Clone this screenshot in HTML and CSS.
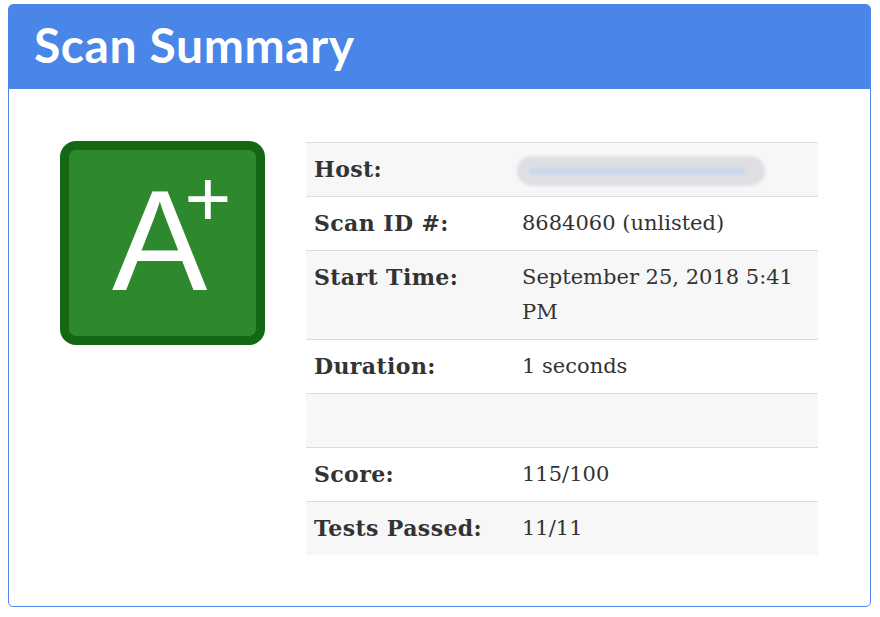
FILE: index.html
```html
<!DOCTYPE html>
<html>
<head>
<meta charset="utf-8">
<link rel="stylesheet" href="styles.css">
</head>
<body>
<div class="card">
  <div class="card-header"><h1 class="title">Scan Summary</h1></div>
  <div class="card-body">
    <div class="grade">
      <span class="grade-letter">A</span><span class="grade-mod">+</span>
    </div>
    <table class="summary">
      <tr class="odd"><th>Host:</th><td><span class="blur"><span class="blur-dots"></span></span></td></tr>
      <tr><th>Scan ID #:</th><td>8684060 (unlisted)</td></tr>
      <tr class="odd"><th>Start Time:</th><td>September 25, 2018 5:41 PM</td></tr>
      <tr><th>Duration:</th><td>1 seconds</td></tr>
      <tr class="odd"><th>&nbsp;</th><td>&nbsp;</td></tr>
      <tr><th>Score:</th><td>115/100</td></tr>
      <tr class="odd"><th>Tests Passed:</th><td>11/11</td></tr>
    </table>
  </div>
</div>
</body>
</html>
```
FILE: styles.css
```css
html, body { margin: 0; padding: 0; background: #fff; }
body { padding: 4px 9px 8px 8px; }
.card {
  border: 1px solid #4a86e8;
  border-radius: 5px;
  overflow: hidden;
  height: 603px;
  box-sizing: border-box;
}
.card-header {
  background: #4a86e8;
  height: 84px;
  display: flex;
  align-items: center;
  padding-left: 25px;
}
.title {
  margin: 0;
  color: #fff;
  font-family: "Lato", "Open Sans", sans-serif;
  font-weight: 700;
  font-size: 48px;
  letter-spacing: 0.6px;
  line-height: 1;
  padding-bottom: 4px;
}
.card-body {
  display: flex;
  align-items: flex-start;
  padding: 52px 52px 0 51px;
  gap: 41px;
}
.grade {
  width: 205px;
  height: 204px;
  box-sizing: border-box;
  border: 9px solid #146814;
  border-radius: 16px;
  background: #2e882e;
  color: #fff;
  font-family: "Liberation Sans", Arial, sans-serif;
  display: flex;
  justify-content: flex-start;
  align-items: flex-start;
  padding-left: 43px;
  flex: none;
}
.grade-letter {
  font-size: 143px;
  line-height: 1;
  margin-top: 19px;
}
.grade-mod {
  font-size: 80px;
  line-height: 1;
  margin-top: 9px;
  margin-left: -23px;
}
.summary {
  flex: 1;
  border-collapse: collapse;
  font-family: "DejaVu Serif", Georgia, serif;
  font-size: 21px;
  color: #333;
  margin-top: 1px;
}
.summary tr { border-top: 1px solid #dcdcdc; }
.summary tr.odd { background: #f7f7f7; }
.summary th, .summary td {
  text-align: left;
  vertical-align: top;
  padding: 9px 8px 9px 8px;
  line-height: 35px;
}
.summary th { width: 192px; font-weight: 700; font-size: 22px; letter-spacing: 0.4px; }
.summary td { padding-right: 12px; }
.blur {
  display: inline-block;
  width: 248px;
  height: 30px;
  border-radius: 15px;
  background: #dedfe2;
  vertical-align: middle;
  margin-left: -5px;
  position: relative;
  filter: blur(1.5px);
}
.blur-dots {
  position: absolute;
  left: 12px;
  right: 20px;
  top: 12px;
  height: 6px;
  border-radius: 3px;
  background: #c9d6ee;
}
```
